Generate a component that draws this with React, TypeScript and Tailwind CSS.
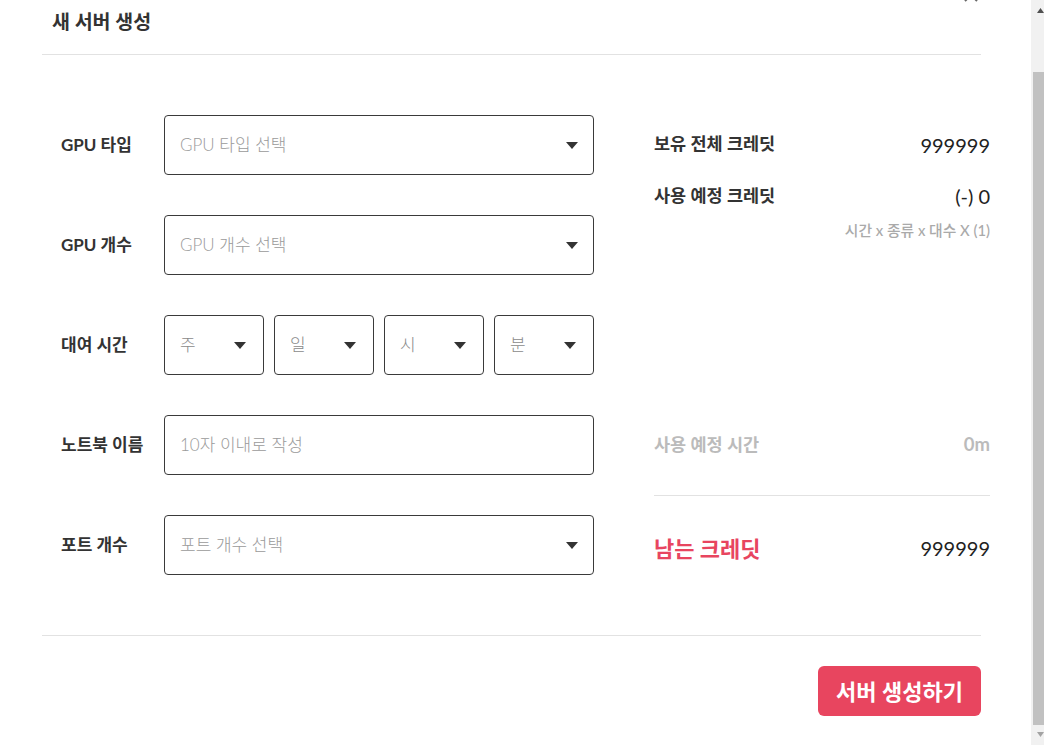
import { useEffect, useRef } from 'react';

const font = { fontFamily: '"Lato", "Noto Sans CJK KR", sans-serif' };

function Caret() {
  return (
    <svg width="12" height="7" viewBox="0 0 12 7" className="shrink-0">
      <path d="M0 0 L12 0 L6 7 Z" fill="#333" />
    </svg>
  );
}

function Select({ placeholder }: { placeholder: string }) {
  return (
    <div className="flex h-[60px] w-[430px] items-center justify-between rounded-[4px] border border-[#3a3a3a] pl-[15px] pr-[15px]">
      <span className="text-[17px] font-light text-[#9a9a9a]">{placeholder}</span>
      <Caret />
    </div>
  );
}

function SmallSelect({ label }: { label: string }) {
  return (
    <div className="flex h-[60px] w-[100px] items-center justify-between rounded-[4px] border border-[#3a3a3a] pl-[15px] pr-[17px]">
      <span className="text-[17px] font-light text-[#8a8a8a]">{label}</span>
      <Caret />
    </div>
  );
}

function Row({ label, children }: { label: string; children: React.ReactNode }) {
  return (
    <div className="flex items-center">
      <div className="w-[103px] text-[17px] font-bold text-[#333]">{label}</div>
      {children}
    </div>
  );
}

// classic scrollbar drawn beside the scrolled panel
function ScrollBar() {
  return (
    <div className="flex w-[13px] shrink-0 flex-col bg-[#f1f1f1]">
      <div className="flex h-[17px] items-end pb-[4px] pl-[6px]">
        <svg width="7" height="5" viewBox="0 0 7 5">
          <path d="M0 5 L7 5 L3.5 0 Z" fill="#505050" />
        </svg>
      </div>
      <div className="mt-[55px] ml-[2px] h-[653px] bg-[#c1c1c1]" />
      <div className="flex-1" />
      <div className="flex h-[17px] items-start pt-[4px] pl-[6px]">
        <svg width="7" height="5" viewBox="0 0 7 5">
          <path d="M0 0 L7 0 L3.5 5 Z" fill="#a3a3a3" />
        </svg>
      </div>
    </div>
  );
}

export default function App() {
  const scroller = useRef<HTMLDivElement>(null);

  useEffect(() => {
    if (scroller.current) scroller.current.scrollTop = 63;
  }, []);

  return (
    <div className="flex h-screen bg-white" style={font}>
      <div ref={scroller} className="flex-1 overflow-hidden">
        <div className="w-[1029px] px-[42px] pt-[50px] pb-[32px]">
          {/* close */}
          <div className="flex h-[16px] justify-end pr-[8px]">
            <svg width="16" height="16" viewBox="0 0 16 16">
              <path d="M2 2 L14 14 M14 2 L2 14" stroke="#666" strokeWidth="2" />
            </svg>
          </div>

          {/* header */}
          <div className="w-[939px] border-b border-[#e2e2e2] pt-[7px] pb-[20px] pl-[10px]">
            <h1 className="text-[19.5px] leading-[24px] font-bold text-[#333]">새 서버 생성</h1>
          </div>

          {/* body */}
          <div className="flex w-[939px] border-b border-[#e2e2e2] pt-[60px] pb-[60px] pl-[19px]">
            <div className="flex flex-col gap-[40px]">
              <Row label="GPU 타입">
                <Select placeholder="GPU 타입 선택" />
              </Row>
              <Row label="GPU 개수">
                <Select placeholder="GPU 개수 선택" />
              </Row>
              <Row label="대여 시간">
                <div className="flex gap-[10px]">
                  <SmallSelect label="주" />
                  <SmallSelect label="일" />
                  <SmallSelect label="시" />
                  <SmallSelect label="분" />
                </div>
              </Row>
              <Row label="노트북 이름">
                <div className="flex h-[60px] w-[430px] items-center rounded-[4px] border border-[#3a3a3a] pl-[15px]">
                  <span className="text-[17px] font-light text-[#9a9a9a]">10자 이내로 작성</span>
                </div>
              </Row>
              <Row label="포트 개수">
                <Select placeholder="포트 개수 선택" />
              </Row>
            </div>

            <div className="mx-[30px] w-px bg-[#e2e2e2]" />

            <div className="flex w-[336px] shrink-0 flex-col">
              <div className="flex h-[58px] items-center justify-between">
                <span className="text-[17.5px] font-bold text-[#333]">보유 전체 크레딧</span>
                <span className="mt-[2px] text-[20px] text-[#222]">999999</span>
              </div>
              <div className="mt-[11px] flex h-[24px] items-center justify-between">
                <span className="text-[17.5px] font-bold text-[#333]">사용 예정 크레딧</span>
                <span className="text-[20px] text-[#222]">(-) 0</span>
              </div>
              <div className="mt-[14px] text-right text-[14.8px] leading-[16px] font-medium text-[#aaa]">
                시간 x 종류 x 대수 X (1)
              </div>
              <div className="flex-1" />
              <div className="flex h-[24px] items-center justify-between">
                <span className="text-[17.5px] font-bold text-[#bbb]">사용 예정 시간</span>
                <span className="text-[18.5px] font-bold text-[#bbb]">0m</span>
              </div>
              <div className="mt-[38px] h-px bg-[#e2e2e2]" />
              <div className="mt-[25px] flex h-[54px] items-center justify-between">
                <span className="text-[22px] font-bold text-[#e8455f]">남는 크레딧</span>
                <span className="text-[20px] text-[#222]">999999</span>
              </div>
            </div>
          </div>

          {/* footer */}
          <div className="flex w-[939px] justify-end pt-[30px]">
            <button className="h-[50px] w-[163px] rounded-[6px] bg-[#e8455f] text-[22px] font-bold text-white">
              서버 생성하기
            </button>
          </div>
        </div>
      </div>
      <ScrollBar />
    </div>
  );
}
